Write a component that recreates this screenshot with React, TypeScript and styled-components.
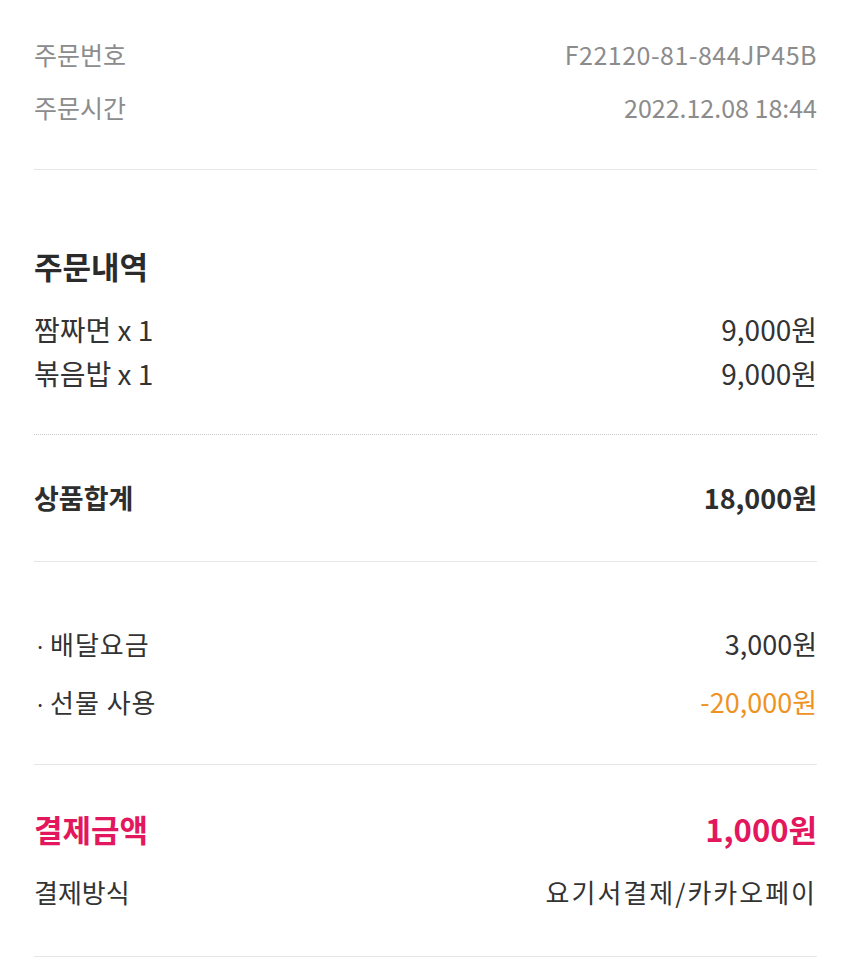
import React from 'react';
import styled, { createGlobalStyle, css } from 'styled-components';

const GlobalStyle = createGlobalStyle`
  html, body {
    margin: 0;
    padding: 0;
    background: #ffffff;
  }
  body {
    font-family: "Noto Sans CJK KR", "Noto Sans", sans-serif;
    color: #333333;
  }
`;

const Page = styled.div`
  padding: 0 33px 0 34px;
  width: 850px;
  box-sizing: border-box;
`;

const Section = styled.section<{ $top: number; $bottom: number; $dotted?: boolean; $gap?: number }>`
  display: flex;
  flex-direction: column;
  gap: ${({ $gap }) => $gap ?? 0}px;
  padding: ${({ $top }) => $top}px 0 ${({ $bottom }) => $bottom}px;
  border-bottom: 1px ${({ $dotted }) => ($dotted ? 'dotted #c8c8c8' : 'solid #e6e6e6')};
`;

type Tone = 'muted' | 'item' | 'normal' | 'amount' | 'strong' | 'accent' | 'discount';

const toneStyles: Record<Tone, ReturnType<typeof css>> = {
  muted: css`
    color: #8c8c8c;
    font-size: 25px;
    font-weight: 400;
  `,
  item: css`
    color: #333333;
    font-size: 28px;
    font-weight: 400;
  `,
  normal: css`
    color: #333333;
    font-size: 26px;
    font-weight: 400;
  `,
  amount: css`
    color: #333333;
    font-size: 27px;
    font-weight: 400;
  `,
  strong: css`
    color: #2e2e2e;
    font-size: 27px;
    font-weight: 700;
  `,
  accent: css`
    color: #e3175d;
    font-size: 31px;
    font-weight: 700;
  `,
  discount: css`
    color: #ee931f;
    font-size: 27px;
    font-weight: 400;
  `,
};

const Row = styled.div<{ $height?: number }>`
  display: flex;
  justify-content: space-between;
  align-items: center;
  height: ${({ $height }) => $height ?? 40}px;
`;

const Cell = styled.span<{ $tone: Tone }>`
  line-height: 40px;
  white-space: nowrap;
  ${({ $tone }) => toneStyles[$tone]}
`;

const Title = styled.h2`
  margin: 0 0 19px;
  font-size: 31px;
  font-weight: 700;
  line-height: 40px;
  color: #2b2b2b;
`;

const Bullet = styled.span`
  display: inline-block;
  width: 16px;
  font-size: 22px;
  color: #333333;
`;

const Spaced = styled(Cell)<{ $spacing?: number }>`
  letter-spacing: ${({ $spacing }) => $spacing ?? 1}px;
`;

export default function App() {
  return (
    <>
      <GlobalStyle />
      <Page>
        <Section $top={36} $bottom={44} $gap={17}>
          <Row $height={36}>
            <Cell $tone="muted">주문번호</Cell>
            <Spaced $tone="muted" $spacing={0.5}>F22120-81-844JP45B</Spaced>
          </Row>
          <Row $height={36}>
            <Cell $tone="muted">주문시간</Cell>
            <Cell $tone="muted">2022.12.08 18:44</Cell>
          </Row>
        </Section>

        <Section $top={76} $bottom={41} $dotted $gap={4}>
          <Title>주문내역</Title>
          <Row>
            <Cell $tone="item">짬짜면 x 1</Cell>
            <Cell $tone="item">9,000원</Cell>
          </Row>
          <Row>
            <Cell $tone="item">볶음밥 x 1</Cell>
            <Cell $tone="item">9,000원</Cell>
          </Row>
        </Section>

        <Section $top={43} $bottom={43}>
          <Row>
            <Cell $tone="strong">상품합계</Cell>
            <Cell $tone="strong">18,000원</Cell>
          </Row>
        </Section>

        <Section $top={62} $bottom={42} $gap={18}>
          <Row>
            <Spaced $tone="normal">
              <Bullet>·</Bullet>배달요금
            </Spaced>
            <Cell $tone="amount">3,000원</Cell>
          </Row>
          <Row>
            <Spaced $tone="normal">
              <Bullet>·</Bullet>선물 사용
            </Spaced>
            <Cell $tone="discount">-20,000원</Cell>
          </Row>
        </Section>

        <Section $top={44} $bottom={44} $gap={23}>
          <Row>
            <Cell $tone="accent">결제금액</Cell>
            <Cell $tone="accent">1,000원</Cell>
          </Row>
          <Row>
            <Cell $tone="normal">결제방식</Cell>
            <Spaced $tone="normal" $spacing={2}>요기서결제/카카오페이</Spaced>
          </Row>
        </Section>
      </Page>
    </>
  );
}
